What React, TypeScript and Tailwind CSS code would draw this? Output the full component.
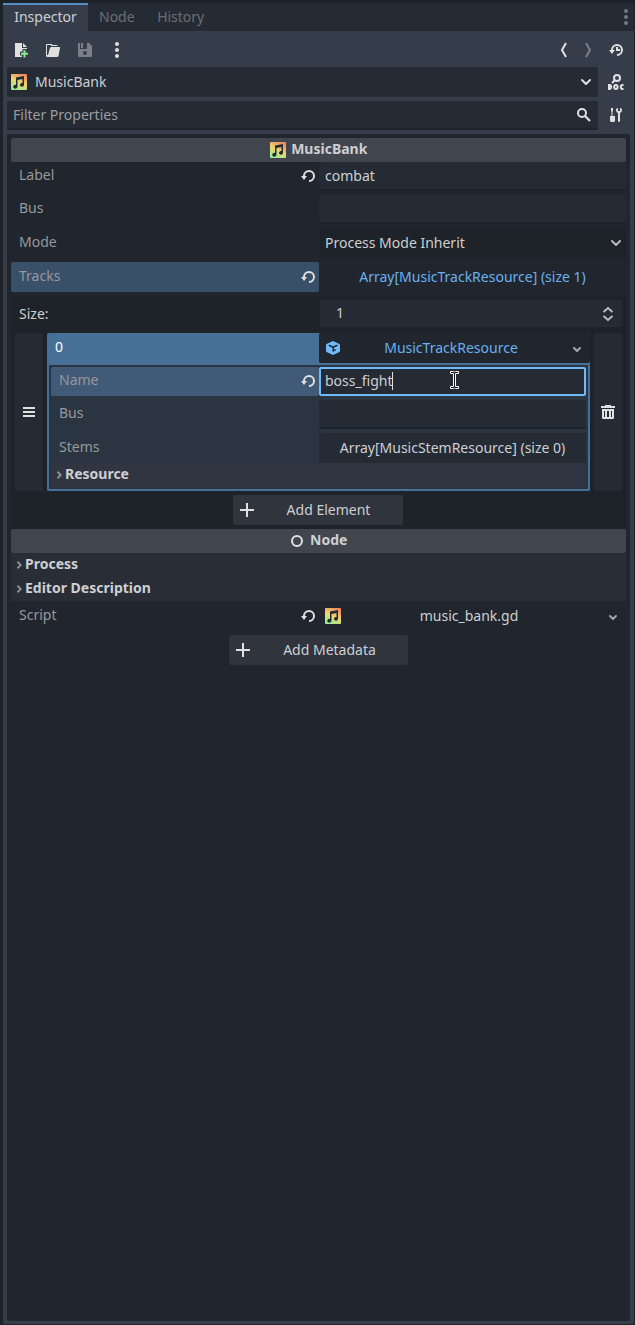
import type { ReactNode } from "react";

type IconProps = { className?: string };

function Svg({ className = "", fill = "#e0e0e0", children }: IconProps & { fill?: string; children: ReactNode }) {
  return (
    <svg viewBox="0 0 16 16" fill={fill} className={`size-4 shrink-0 ${className}`}>
      {children}
    </svg>
  );
}

const Reload = ({ className }: IconProps) => (
  <Svg className={className}>
    <path d="M9 2a6 6 0 0 0-6 6H1l3 4 3-4H5a4 4 0 1 1 4 4v2A6 6 0 0 0 9 2z" />
  </Svg>
);

const ChevronDown = ({ className }: IconProps) => (
  <Svg className={className}>
    <path d="m4 6 4 4 4-4" fill="none" stroke="#e0e0e0" strokeWidth="2" strokeLinecap="round" strokeLinejoin="round" />
  </Svg>
);

const SmallChevron = ({ className }: IconProps) => (
  <Svg className={className}>
    <path d="m5 7 3 3 3-3" fill="none" stroke="#a4a7ac" strokeWidth="2" strokeLinecap="round" strokeLinejoin="round" />
  </Svg>
);

const Plus = () => (
  <Svg>
    <path d="M7 1v6H1v2h6v6h2V9h6V7H9V1z" />
  </Svg>
);

const Dots = ({ className, fill }: IconProps & { fill?: string }) => (
  <Svg className={className} fill={fill}>
    <circle cx="8" cy="2" r="2" />
    <circle cx="8" cy="8" r="2" />
    <circle cx="8" cy="14" r="2" />
  </Svg>
);

function MusicIcon({ id }: { id: string }) {
  return (
    <Svg>
      <defs>
        <linearGradient id={id} x1="0.2" y1="1" x2="0.7" y2="0">
          <stop offset="0" stopColor="#8eef97" />
          <stop offset="0.5" stopColor="#ecd66e" />
          <stop offset="1" stopColor="#f08a62" />
        </linearGradient>
      </defs>
      <rect width="16" height="16" rx="1" fill={`url(#${id})`} />
      <path
        fill="#252b34"
        d="M5 3.600 13 2v8.800a2 1.900 0 1 1-1.500-1.800V5.100L6.500 6.100v6.500A2.100 1.900 0 1 1 5 10.900z"
      />
    </Svg>
  );
}

function Field({ className = "", children }: IconProps & { children?: ReactNode }) {
  return (
    <div className={`flex items-center rounded-[2px] border-b-2 border-[#1e2229] bg-[#252b34] pl-1.5 ${className}`}>
      {children}
    </div>
  );
}

function Section({ title, className = "" }: { title: string; className?: string }) {
  return (
    <div className={`flex h-6 items-center font-bold ${className}`}>
      <svg viewBox="0 0 6 8" className="mr-[3px] h-2 w-1.5">
        <path d="m1.500 .8 3.200 3.200-3.200 3.200" fill="none" stroke="#8d9096" strokeWidth="2" />
      </svg>
      <span className="-mt-0.5">{title}</span>
    </div>
  );
}

function AddButton({ text, className }: { text: string; className: string }) {
  return (
    <button className={`flex h-[30px] items-center rounded-[2px] bg-[#2f343d] pl-1.5 ${className}`}>
      <Plus />
      <span className="flex-1 text-center">{text}</span>
    </button>
  );
}

function PropertyLabel({
  text,
  reload = false,
  reloadClass = "",
  className = "",
}: {
  text: string;
  reload?: boolean;
  reloadClass?: string;
  className?: string;
}) {
  return (
    <div className={`flex items-center justify-between pr-[3px] pl-2 text-[#96989c] ${className}`}>
      <span className="-mt-[3px]">{text}</span>
      {reload && <Reload className={reloadClass} />}
    </div>
  );
}

export default function App() {
  return (
    <div className="h-[1325px] w-[635px] bg-[#1e2229] pt-[3px] pr-px pb-px pl-[3px] font-['Noto_Sans',sans-serif] text-[14px] leading-5 text-[#cdcfd2]">
      <div className="flex h-[1321px] flex-col rounded-[2px] bg-[#363d4a]">
        <nav className="flex h-7 shrink-0 items-center bg-[#252b34] text-[#6a6e74]">
          <div className="flex h-7 w-[85px] justify-center border-t-2 border-[#5790c0] bg-[#363d4a] pt-0.5 text-[#cdcfd2]">
            Inspector
          </div>
          <span className="ml-[11px]">Node</span>
          <span className="ml-[22.500px]">History</span>
          <Dots className="ml-auto" fill="#75787e" />
        </nav>

        <div className="flex h-9 shrink-0 items-center pt-0.5 pl-2.5">
          <Svg>
            <path d="M2 1v14h7v-1.500H7v-4h2.500V7H14V6H9V1zm8 0v4h4z" />
            <path fill="#84ee8c" d="M10.500 8.300h2v2.500H15v2h-2.500v2.700h-2v-2.700H8v-2h2.500z" />
          </Svg>
          <Svg className="ml-4">
            <path
              fillRule="evenodd"
              d="M2 2a1 1 0 0 0-1 1v10.500A1.500 1.500 0 0 0 2.500 15H12a1.600 1.600 0 0 0 1.500-1.200L15 6V5H6.500A1.500 1.500 0 0 0 5 6.100L3 13H2V3h4v1h7a2 2 0 0 0-2-1H8a1 1 0 0 1-1-1z"
            />
          </Svg>
          <Svg className="ml-4" fill="#7b7f87">
            <path
              fillRule="evenodd"
              d="M2 1a1 1 0 0 0-1 1v12a1 1 0 0 0 1 1h12a1 1 0 0 0 1-1V4l-3-3zm1 0h1v5h2V1h4v6H3zm5 8a2 2 0 1 1 0 4 2 2 0 0 1 0-4z"
            />
          </Svg>
          <Dots className="ml-4" />
          <Svg className="ml-auto">
            <path d="M10 1 6 8l4 7" fill="none" stroke="#e0e0e0" strokeWidth="2" />
          </Svg>
          <Svg className="ml-2">
            <path d="m6 1 4 7-4 7" fill="none" stroke="#7b7f87" strokeWidth="2" />
          </Svg>
          <Svg className="mr-2.5 ml-3">
            <path d="M9 2a6 6 0 0 0-6 6H1l3 4 3-4H5a4 4 0 1 1 4 4v2A6 6 0 0 0 9 2zM8 5v4h4V7h-2V5z" />
          </Svg>
        </div>

        <div className="flex h-[30px] shrink-0 items-center pl-1">
          <div className="flex h-[30px] w-[591px] items-center rounded-[2px] bg-[#252b34] pr-1 pl-1">
            <MusicIcon id="music-object" />
            <span className="ml-2">MusicBank</span>
            <ChevronDown className="ml-auto" />
          </div>
          <Svg className="ml-2.5">
            <circle cx="9" cy="4" r="3" fill="none" stroke="#e0e0e0" strokeWidth="2" />
            <path d="M7 6 4 9" stroke="#e0e0e0" strokeWidth="2" />
            <path
              d="M1 11h.8a2.100 2.100 0 0 1 0 4H1zM7.900 11a1.700 2 0 1 1 0 4 1.700 2 0 0 1 0-4zM15.500 11h-1a1.700 2 0 0 0 0 4h1"
              fill="none"
              stroke="#e0e0e0"
              strokeWidth="2"
            />
          </Svg>
        </div>

        <div className="mt-1 flex h-[29px] shrink-0 items-center pl-1">
          <Field className="h-[29px] w-[591px] pr-1.5 text-[#9a9da1]">
            Filter Properties
            <Svg className="mt-px ml-auto">
              <circle cx="6" cy="6" r="4" fill="none" stroke="#e0e0e0" strokeWidth="2" />
              <path d="m9 9 5 5" stroke="#e0e0e0" strokeWidth="2.200" />
            </Svg>
          </Field>
          <Svg className="mb-px ml-2.5">
            <path d="M3 1h2v2.500L4.500 5v4H7v4.500a1.500 1.500 0 0 1-1.500 1.500h-2A1.500 1.500 0 0 1 2 13.500V9h1.500V5L3 3.500zM9 1A3 3 0 0 0 8 3.200a3 3 0 0 0 2 2.700V14a1 1 0 0 0 2 0V5.900a3 3 0 0 0 2-2.700A3 3 0 0 0 13 1l-1 .2V4h-2V1.200z" />
          </Svg>
        </div>

        <main className="mx-1 mt-1 h-[1187px] rounded-[2px] bg-[#21262e] px-1 pt-1">
          <h2 className="flex h-6 items-center justify-center rounded-[2px] bg-[#41454d] font-bold">
            <MusicIcon id="music-category" />
            <span className="-mt-0.5 ml-[5.500px]">MusicBank</span>
          </h2>

          <div className="flex h-[29px]">
            <PropertyLabel text="Label" reload reloadClass="mb-px" className="w-[308px]" />
            <Field className="flex-1">combat</Field>
          </div>
          <div className="mt-1 flex h-[29px]">
            <PropertyLabel text="Bus" className="w-[308px]" />
            <Field className="flex-1" />
          </div>
          <div className="mt-1 flex h-[30px]">
            <PropertyLabel text="Mode" className="w-[308px]" />
            <div className="flex flex-1 items-center justify-between rounded-[2px] bg-[#1e2229] pr-0.5 pl-1.5">
              Process Mode Inherit
              <ChevronDown className="opacity-80" />
            </div>
          </div>
          <div className="mt-1 flex h-[30px]">
            <PropertyLabel text="Tracks" reload className="w-[308px] rounded-[2px] bg-[#385068]" />
            <div className="flex flex-1 items-center justify-center text-[#68b0ee]">
              Array[MusicTrackResource] (size 1)
            </div>
          </div>

          <section className="mt-1 h-[233px] rounded-[2px] bg-[#1e2229] px-1 pt-1">
            <div className="flex h-[27px] items-center">
              <span className="w-[305px] pl-1">Size:</span>
              <div className="flex h-[27px] w-[302px] items-center justify-between rounded-[2px] bg-[#252b34] pr-1.5 pl-4">
                <span className="mb-px">1</span>
                <Svg className="mt-px">
                  <path
                    d="M3.500 6 8 2l4.500 4M3.500 10l4.500 4 4.500-4"
                    fill="none"
                    stroke="#b9bbbe"
                    strokeWidth="2"
                  />
                </Svg>
              </div>
            </div>

            <div className="mt-1.5 flex h-[158px] gap-1">
              <div className="flex w-7 items-center justify-center rounded-[2px] bg-[#252b34]">
                <Svg>
                  <path d="M2 3h12v2H2zm0 4h12v2H2zm0 4h12v2H2z" />
                </Svg>
              </div>
              <div className="flex w-[543px] flex-col rounded-[2px] border-2 border-t-0 border-[#467096] bg-[#2b3541]">
                <div className="flex h-8 shrink-0 bg-[#467096]">
                  <span className="w-[270px] pt-1 pl-1.5 text-white">0</span>
                  <div className="-mr-0.5 flex h-[30px] flex-1 items-center rounded-[2px] bg-[#21262e] pr-[5px] pl-1.5">
                    <Svg fill="#70bafa">
                      <path d="M8 1 1.500 4Q1 4.300 1 5v6q0 .7.500 1L8 15l6.500-3q.5-.3.5-1V5q0-.7-.5-1z" />
                      <path
                        d="m3.800 5.300 4.200 1.900 4.500-2M8.300 7.200v3.600l2.400-1.200"
                        fill="none"
                        stroke="#21262e"
                        strokeWidth="1.500"
                      />
                    </Svg>
                    <span className="flex-1 pr-2 text-center text-[#68b0ee]">MusicTrackResource</span>
                    <SmallChevron className="mt-0.5" />
                  </div>
                </div>
                <div className="mt-0.5 flex h-[29px] px-0.5">
                  <PropertyLabel
                    text="Name"
                    reload
                    reloadClass="mb-px"
                    className="w-[268px] rounded-[2px] bg-[#405a77]"
                  />
                  <div className="relative flex w-[267px] items-center rounded-[2px] border-2 border-[#70bafa] bg-[#252b34] pl-1">
                    <span className="mb-px">boss_fight</span>
                    <span className="mb-px h-[18px] w-px bg-[#e0e0e0]" />
                    <svg viewBox="0 0 9 18" className="absolute top-0.5 left-[129px] h-[18px] w-[9px]">
                      <path
                        d="M.5.5h3l1 .5 1-.5h3v2h-3V15.500h3v2h-3l-1-.5-1 .5h-3v-2h3V2.500h-3z"
                        fill="#111"
                        stroke="#fff"
                        strokeWidth="1"
                      />
                    </svg>
                  </div>
                </div>
                <div className="mt-1 flex h-[29px] px-0.5">
                  <PropertyLabel text="Bus" className="w-[268px]" />
                  <Field className="w-[267px]" />
                </div>
                <div className="mt-1 flex h-[30px] px-0.5">
                  <PropertyLabel text="Stems" className="w-[268px]" />
                  <div className="flex w-[267px] items-center justify-center rounded-[2px] bg-[#252b34]">
                    Array[MusicStemResource] (size 0)
                  </div>
                </div>
                <Section title="Resource" className="mx-0.5 bg-[#303541] pl-[5px]" />
              </div>
              <div className="flex w-7 items-center justify-center rounded-[2px] bg-[#252b34]">
                <Svg>
                  <path
                    fillRule="evenodd"
                    d="M5 1v1H1v2h14V2h-4V1zM2 5v9a1 1 0 0 0 1 1h10a1 1 0 0 0 1-1V5zm2 2h1v6H4zm3 0h2v6H7zm4 0h1v6h-1z"
                  />
                </Svg>
              </div>
            </div>

            <div className="flex justify-center pt-1 pr-px">
              <AddButton text="Add Element" className="-ml-px w-[170px]" />
            </div>
          </section>

          <h2 className="flex h-6 items-center justify-center rounded-[2px] bg-[#41454d] pr-px font-bold">
            <Svg>
              <circle cx="8" cy="8" r="5" fill="none" stroke="#e0e0e0" strokeWidth="2" />
            </Svg>
            <span className="-mt-0.5 ml-[5.500px]">Node</span>
          </h2>
          <Section title="Process" className="bg-[#292d36] pl-[5px]" />
          <Section title="Editor Description" className="bg-[#292d36] pl-[5px]" />

          <div className="flex h-[30px]">
            <PropertyLabel text="Script" reload className="w-[308px]" />
            <div className="flex flex-1 items-center pr-[5px] pl-1.5">
              <MusicIcon id="music-script" />
              <span className="flex-1 pr-2 text-center">music_bank.gd</span>
              <SmallChevron className="mt-0.5" />
            </div>
          </div>
          <div className="mt-1 flex justify-center">
            <AddButton text="Add Metadata" className="w-[179px]" />
          </div>
        </main>
      </div>
    </div>
  );
}
